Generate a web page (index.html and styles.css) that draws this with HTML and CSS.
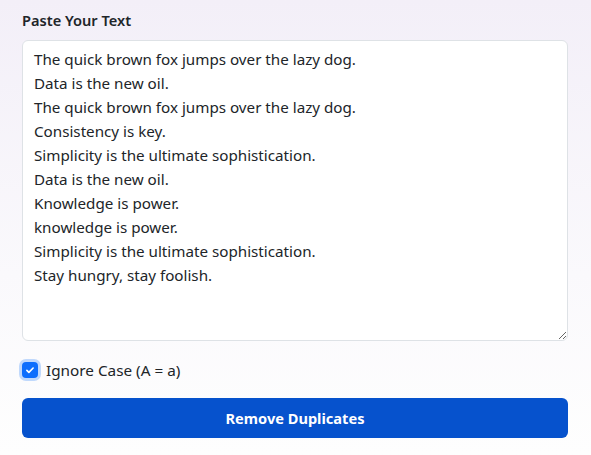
FILE: index.html
```html
<!DOCTYPE html>
<html lang="en">
<head>
    <meta charset="UTF-8">
    <meta name="viewport" content="width=device-width, initial-scale=1.0">
    <title>Remove Duplicate Lines</title>
    <link rel="stylesheet" href="styles.css">
</head>
<body>
    <div class="tool">
        <label class="field-label" for="inputText">Paste Your Text</label>
        <textarea id="inputText" class="text-input">The quick brown fox jumps over the lazy dog.
Data is the new oil.
The quick brown fox jumps over the lazy dog.
Consistency is key.
Simplicity is the ultimate sophistication.
Data is the new oil.
Knowledge is power.
knowledge is power.
Simplicity is the ultimate sophistication.
Stay hungry, stay foolish.</textarea>

        <label class="check-row">
            <span class="check-box">
                <svg width="10" height="10" viewBox="0 0 16 16" aria-hidden="true">
                    <path d="M3 8.5l3.2 3.2L13 4.8" fill="none" stroke="#fff" stroke-width="2.6" stroke-linecap="round" stroke-linejoin="round"/>
                </svg>
            </span>
            <span>Ignore Case (A = a)</span>
        </label>

        <button class="btn-primary">Remove Duplicates</button>
    </div>
</body>
</html>
```

FILE: styles.css
```css
html, body {
    margin: 0;
    min-height: 100%;
}
body {
    font-family: "Noto Sans", "Open Sans", sans-serif;
    color: #212529;
    background: linear-gradient(180deg, #f3eff8 0%, #faf9fc 60%, #fefefe 100%);
    min-height: 455px;
}
.tool {
    padding: 9px 23px 0 22px;
    display: flex;
    flex-direction: column;
}
.field-label {
    font-size: 14.6px;
    font-weight: 600;
    line-height: 22px;
    margin-bottom: 9px;
}
.text-input {
    box-sizing: border-box;
    width: 100%;
    height: 301px;
    padding: 6px 11px;
    border: 1px solid #dee2e6;
    border-radius: 6px;
    background-color: #fff;
    color: #212529;
    font-family: inherit;
    font-size: 15.2px;
    line-height: 24px;
    outline: none;
}
.check-row {
    display: flex;
    align-items: center;
    gap: 8px;
    margin-top: 20px;
    font-size: 15.3px;
    line-height: 18px;
}
.check-box {
    width: 16px;
    height: 16px;
    border-radius: 4px;
    background-color: #0d6efd;
    box-shadow: 0 0 0 3px rgba(13, 110, 253, 0.25);
    display: flex;
    align-items: center;
    justify-content: center;
}
.btn-primary {
    margin-top: 19px;
    height: 40px;
    width: 100%;
    border: none;
    border-radius: 6px;
    background-color: #0652cd;
    color: #fff;
    font-family: inherit;
    font-size: 14.6px;
    font-weight: 700;
    cursor: pointer;
}
```
